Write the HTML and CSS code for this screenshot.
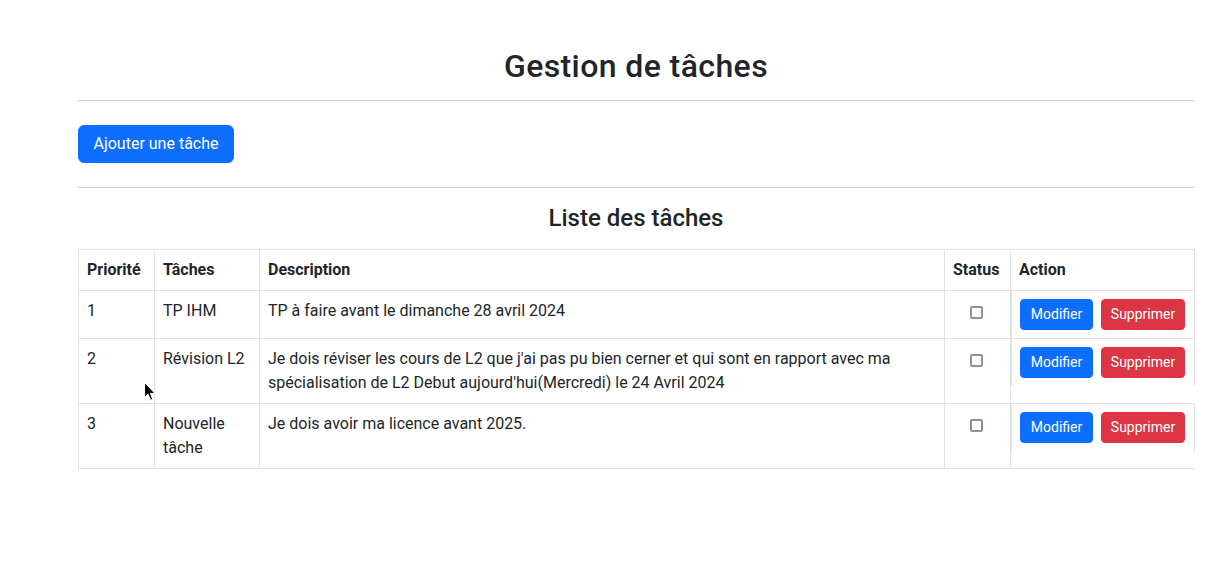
FILE: index.html
```html
<!DOCTYPE html>
<html lang="fr">
<head>
<meta charset="utf-8">
<title>Gestion de tâches</title>
<link rel="stylesheet" href="styles.css">
</head>
<body>
<main class="page">
  <h2 class="title">Gestion de tâches</h2>
  <hr class="rule">
  <div class="toolbar">
    <button class="btn btn-primary btn-add">Ajouter une tâche</button>
  </div>
  <hr class="rule">
  <h4 class="subtitle">Liste des tâches</h4>
  <table class="tasks">
    <colgroup>
      <col class="c-prio">
      <col class="c-task">
      <col class="c-desc">
      <col class="c-status">
      <col class="c-action">
    </colgroup>
    <thead>
      <tr>
        <th>Priorité</th>
        <th>Tâches</th>
        <th>Description</th>
        <th>Status</th>
        <th>Action</th>
      </tr>
    </thead>
    <tbody>
      <tr>
        <td>1</td>
        <td>TP IHM</td>
        <td>TP à faire avant le dimanche 28 avril 2024</td>
        <td class="center"><input type="checkbox" class="check"></td>
        <td class="action"><div class="action-box"><button class="btn btn-sm btn-primary btn-edit">Modifier</button><button class="btn btn-sm btn-danger btn-delete">Supprimer</button></div></td>
      </tr>
      <tr>
        <td>2</td>
        <td>Révision L2</td>
        <td>Je dois réviser les cours de L2 que j'ai pas pu bien cerner et qui sont en rapport avec ma spécialisation de L2 Debut aujourd'hui(Mercredi) le 24 Avril 2024</td>
        <td class="center"><input type="checkbox" class="check"></td>
        <td class="action"><div class="action-box"><button class="btn btn-sm btn-primary btn-edit">Modifier</button><button class="btn btn-sm btn-danger btn-delete">Supprimer</button></div></td>
      </tr>
      <tr>
        <td>3</td>
        <td>Nouvelle tâche</td>
        <td>Je dois avoir ma licence avant 2025.</td>
        <td class="center"><input type="checkbox" class="check"></td>
        <td class="action"><div class="action-box"><button class="btn btn-sm btn-primary btn-edit">Modifier</button><button class="btn btn-sm btn-danger btn-delete">Supprimer</button></div></td>
      </tr>
    </tbody>
  </table>
</main>
<svg class="cursor" width="13" height="20" viewBox="0 0 13 20" aria-hidden="true">
  <path d="M0.5 0.5 L0.5 15.5 L4 12.2 L6.6 18.2 L8.8 17.3 L6.3 11.4 L11 11.4 Z" fill="#000" stroke="#fff" stroke-width="1"/>
</svg>
</body>
</html>
```
FILE: styles.css
```css
html, body {
  margin: 0;
  background: #fff;
}
body {
  position: relative;
  font-family: "Roboto", "Liberation Sans", sans-serif;
  font-size: 16px;
  line-height: 1.5;
  color: #212529;
}
.page {
  padding: 47px 15px 40px 78px;
}
.title {
  margin: 0 0 15px;
  text-align: center;
  font-size: 32px;
  font-weight: 500;
  line-height: 1.2;
  letter-spacing: 0.4px;
}
.rule {
  margin: 0;
  border: 0;
  border-top: 1px solid #c8c9ca;
  height: 0;
}
.toolbar {
  display: flex;
  padding: 24px 0;
}
.btn {
  font-family: inherit;
  font-size: 16px;
  line-height: 1.5;
  font-weight: 400;
  padding: 6px 12px;
  border: 1px solid transparent;
  border-radius: 6px;
  color: #fff;
  cursor: pointer;
}
.btn-add {
  min-width: 156px;
}
.btn-primary {
  background: #0d6efd;
  border-color: #0d6efd;
}
.btn-danger {
  background: #dc3545;
  border-color: #dc3545;
}
.btn-sm {
  font-size: 14px;
  padding: 4px 8px;
  border-radius: 4px;
}
.btn-edit {
  min-width: 73px;
}
.btn-delete {
  min-width: 84px;
}
.subtitle {
  margin: 16px 0;
  text-align: center;
  font-size: 24px;
  font-weight: 500;
  line-height: 1.2;
}
.tasks {
  width: 100%;
  table-layout: fixed;
  border-collapse: collapse;
  vertical-align: top;
}
.c-prio { width: 76px; }
.c-task { width: 105px; }
.c-desc { width: 685px; }
.c-status { width: 66px; }
.c-action { width: 184px; }
.tasks th,
.tasks td {
  padding: 8px;
  text-align: left;
  vertical-align: top;
  border: 1px solid #dee2e6;
}
.tasks th {
  font-weight: 700;
}
.tasks .center {
  text-align: center;
}
.check {
  appearance: none;
  -webkit-appearance: none;
  display: block;
  width: 13px;
  height: 13px;
  margin: 7px 0 0 17px;
  border: 2px solid #8f8f9d;
  border-radius: 2px;
  background: #fff;
  box-sizing: border-box;
}
.tasks td.action {
  padding: 0;
  border-right: 0;
}
.action-box {
  display: flex;
  gap: 8px;
  padding: 8px;
  border-left: 1px solid #dee2e6;
  border-right: 1px solid #dee2e6;
}
.cursor {
  position: absolute;
  left: 144px;
  top: 382px;
}
```
